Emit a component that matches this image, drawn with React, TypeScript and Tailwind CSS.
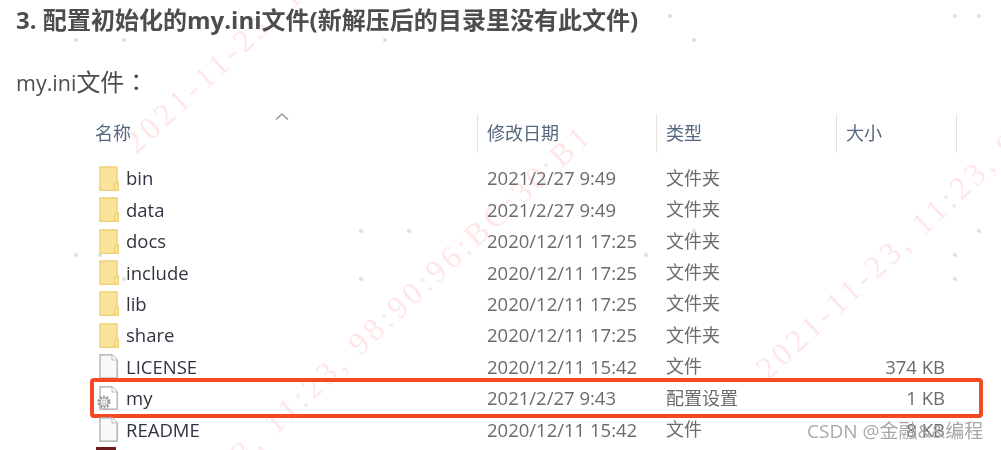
import React from 'react';

const WATERMARK = '2021-11-23, 11:23, 98:90:96:BC:30:B1';

const dots: [number, number][] = [
  [76, 40], [124, 40], [385, 40], [670, 16], [694, 40], [955, 16], [979, 16],
  [361, 231], [409, 231], [76, 255], [100, 255], [361, 279], [124, 279],
  [694, 231], [646, 255], [955, 255], [955, 279], [979, 231],
];

const lines: [number, number][] = [
  [129, 132],
  [113, 557],
  [761, 358],
];

type Row = { name: string; date: string; type: string; size?: string; icon: 'folder' | 'file' | 'config' };

const rows: Row[] = [
  { name: 'bin', date: '2021/2/27 9:49', type: '文件夹', icon: 'folder' },
  { name: 'data', date: '2021/2/27 9:49', type: '文件夹', icon: 'folder' },
  { name: 'docs', date: '2020/12/11 17:25', type: '文件夹', icon: 'folder' },
  { name: 'include', date: '2020/12/11 17:25', type: '文件夹', icon: 'folder' },
  { name: 'lib', date: '2020/12/11 17:25', type: '文件夹', icon: 'folder' },
  { name: 'share', date: '2020/12/11 17:25', type: '文件夹', icon: 'folder' },
  { name: 'LICENSE', date: '2020/12/11 15:42', type: '文件', size: '374 KB', icon: 'file' },
  { name: 'my', date: '2021/2/27 9:43', type: '配置设置', size: '1 KB', icon: 'config' },
  { name: 'README', date: '2020/12/11 15:42', type: '文件', size: '8 KB', icon: 'file' },
];

const FolderIcon = () => (
  <svg width="20" height="25" viewBox="0 0 20 25">
    <path d="M1 1H18V16H19.5V24.5H1Z" fill="#fae39a" stroke="#efd07a" strokeWidth="1.5" />
    <path d="M15.5 24V18L18 16" fill="none" stroke="#efd07a" strokeWidth="1.2" />
  </svg>
);

const FileIcon = () => (
  <svg width="20" height="25" viewBox="0 0 20 25">
    <path d="M1 .8H13L18.2 6V24.2H1Z" fill="#f8f9fb" stroke="#a6a6a6" strokeWidth="1.2" />
    <path d="M13 .8V6H18.2" fill="#fff" stroke="#bdbdbd" strokeWidth="1" />
  </svg>
);

const ConfigIcon = () => (
  <svg width="24" height="25" viewBox="0 0 24 25">
    <path d="M5 .8H17L22.2 6V23.2H5Z" fill="#fff" stroke="#a6a6a6" strokeWidth="1.2" />
    <path d="M17 .8V6H22.2" fill="#fff" stroke="#bdbdbd" strokeWidth="1" />
    <circle cx="9" cy="16" r="5.4" fill="#f2f2f2" stroke="#999999" strokeWidth="2.4" strokeDasharray="2 1.4" />
    <circle cx="9" cy="16" r="4" fill="#f4f4f4" stroke="#a3a3a3" strokeWidth="1" />
    <circle cx="9" cy="16" r="1.8" fill="#fff" stroke="#adadad" strokeWidth="0.8" />
  </svg>
);

const RowIcon = ({ icon }: { icon: Row['icon'] }) => {
  if (icon === 'folder') return <div className="w-[27px] pl-[8px]"><FolderIcon /></div>;
  if (icon === 'file') return <div className="w-[27px] pl-[8px]"><FileIcon /></div>;
  return <div className="w-[27px] pl-[4px]"><ConfigIcon /></div>;
};

const App: React.FC = () => {
  return (
    <div
      className="relative h-[450px] w-[1001px] overflow-hidden bg-white blur-[0.35px]"
      style={{ fontFamily: '"Open Sans", "Noto Sans CJK SC", sans-serif' }}
    >
      {lines.map(([x, y]) => (
        <div
          key={x}
          className="absolute origin-left -rotate-[43deg] whitespace-pre text-[32px] leading-[30px] tracking-[4px] text-[#ffe7e7]"
          style={{ left: x, top: y, fontFamily: '"Liberation Serif", serif' }}
        >
          {WATERMARK}
        </div>
      ))}
      {dots.map(([x, y]) => (
        <div
          key={`${x}-${y}`}
          className="absolute h-[4px] w-[4px] rounded-full bg-[#dedede]"
          style={{ left: x - 2, top: y - 2 }}
        />
      ))}

      <div className="relative pl-[16px] pt-[4px]">
        <h3 className="h-[32px] text-[24px] font-bold leading-[32px] tracking-[0.02px] text-[#4d4d4d]">
          3. 配置初始化的my.ini文件(新解压后的目录里没有此文件)
        </h3>
        <p className="mt-[29px] h-[32px] text-[24px] leading-[32px] text-[#4d4d4d]">
          <span className="text-[21.5px]">my.ini</span>
          <span style={{ fontFamily: '"Noto Sans CJK TC", sans-serif' }}>文件：</span>
        </p>
      </div>

      <div className="relative ml-[91px] mt-[16px] w-[892px]">
        <svg className="absolute left-[184px] top-[-1px]" width="14" height="9" viewBox="0 0 14 9">
          <path d="M1 7.5L7 2L13 7.5" fill="none" stroke="#9a9a9a" strokeWidth="1.6" />
        </svg>
        <div className="flex h-[40px] items-center pt-[1px] text-[18px] text-[#55677f]">
          <div className="flex h-full w-[387px] items-center border-r border-[#e3e3e3] pl-[4px]">名称</div>
          <div className="flex h-full w-[179px] items-center border-r border-[#e3e3e3] pl-[9px]">修改日期</div>
          <div className="flex h-full w-[180px] items-center border-r border-[#e3e3e3] pl-[9px]">类型</div>
          <div className="flex h-full w-[120px] items-center border-r border-[#e3e3e3] pl-[9px]">大小</div>
        </div>
        <div className="mt-[9.6px]">
          {rows.map(row => (
            <div key={row.name} className="relative grid h-[31.4px] grid-cols-[396px_179px_170px_109px] items-center text-[18.5px]">
              <div className="flex items-center text-[#2f3440]">
                <RowIcon icon={row.icon} />
                <span className="ml-[8px]">{row.name}</span>
              </div>
              <div className="text-[#6b6b6b]">{row.date}</div>
              <div className="text-[18px] text-[#6b6b6b]">{row.type}</div>
              <div className="text-right text-[#6b6b6b]">{row.size}</div>
              {row.icon === 'config' && (
                <div className="absolute left-[-1px] top-[-4px] h-[40px] w-[893px] rounded-[4px] border-[4px] border-[#f44a23]" />
              )}
            </div>
          ))}
          <div className="ml-[5px] mt-[2px] h-[20px] w-[20px] bg-[#6b1c1c]" />
        </div>
      </div>

      <div className="absolute left-[807px] top-[419px] whitespace-nowrap text-[19px] leading-[24px] text-[#a8a8a8]">
        CSDN @金融&&编程
      </div>
    </div>
  );
};

export default App;
